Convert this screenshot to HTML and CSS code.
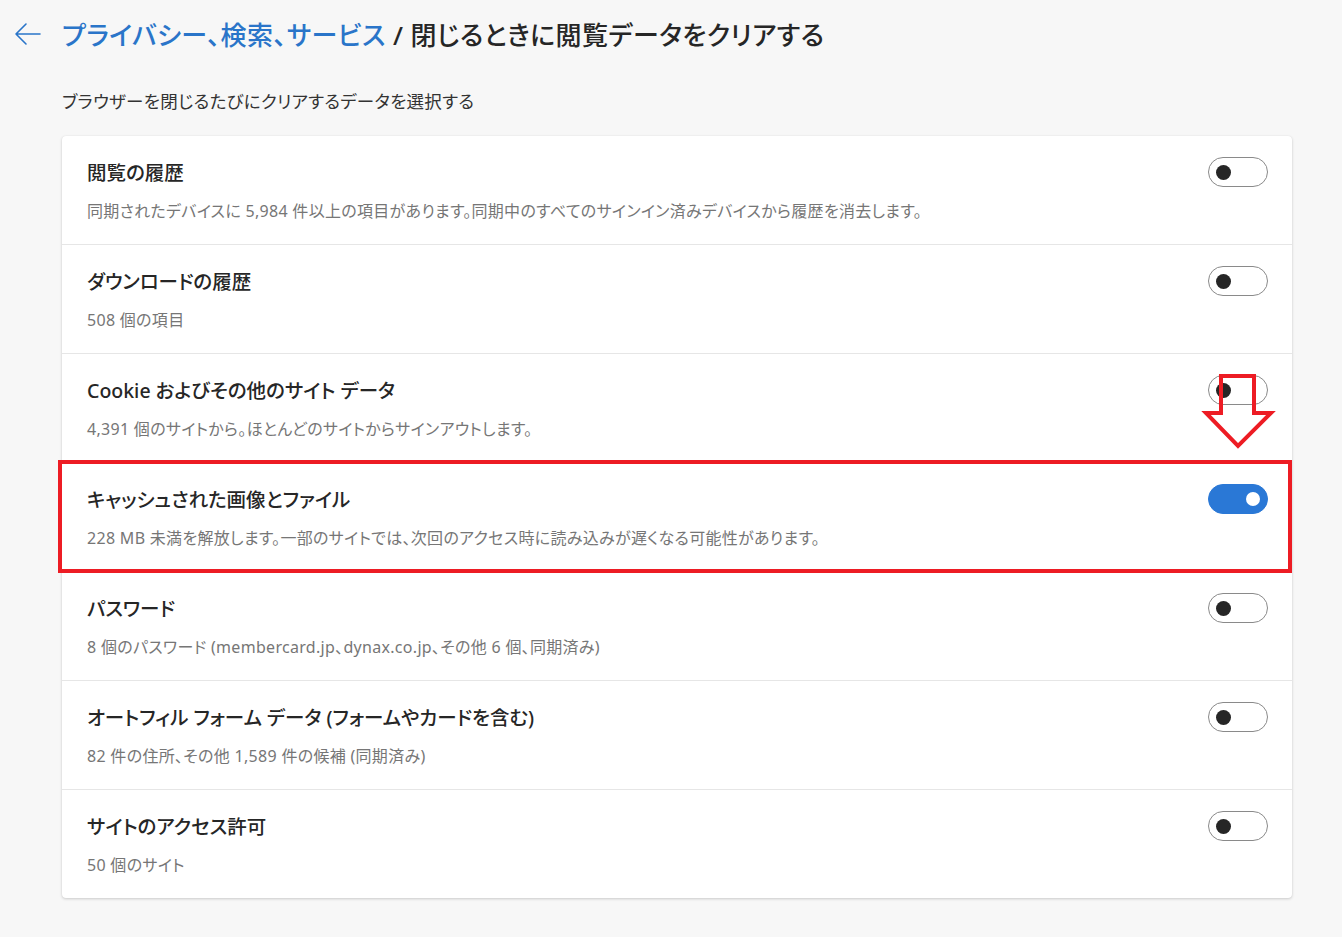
FILE: index.html
```html
<!DOCTYPE html>
<html lang="ja">
<head>
<meta charset="utf-8">
<link rel="stylesheet" href="styles.css">
</head>
<body>
<header class="header">
  <button class="back" aria-label="戻る">
    <svg width="28" height="24" viewBox="0 0 28 24"><path d="M2 12 H26 M12 2 L2 12 L12 22" fill="none" stroke="#2a75c9" stroke-width="1.6" stroke-linecap="round" stroke-linejoin="round"/></svg>
  </button>
  <h1 class="title"><span class="crumb">プライバシー、検索、サービス</span><span class="sep"> / </span>閉じるときに閲覧データをクリアする</h1>
</header>
<p class="lead">ブラウザーを閉じるたびにクリアするデータを選択する</p>
<div class="card-wrap">
  <div class="card">
    <div class="row">
      <div class="text"><div class="rtitle">閲覧の履歴</div><div class="rsub">同期されたデバイスに 5,984 件以上の項目があります。同期中のすべてのサインイン済みデバイスから履歴を消去します。</div></div>
      <span class="toggle"></span>
    </div>
    <div class="row">
      <div class="text"><div class="rtitle">ダウンロードの履歴</div><div class="rsub">508 個の項目</div></div>
      <span class="toggle"></span>
    </div>
    <div class="row">
      <div class="text"><div class="rtitle">Cookie およびその他のサイト データ</div><div class="rsub">4,391 個のサイトから。ほとんどのサイトからサインアウトします。</div></div>
      <span class="toggle"></span>
    </div>
    <div class="row">
      <div class="text"><div class="rtitle">キャッシュされた画像とファイル</div><div class="rsub">228 MB 未満を解放します。一部のサイトでは、次回のアクセス時に読み込みが遅くなる可能性があります。</div></div>
      <span class="toggle on"></span>
    </div>
    <div class="row">
      <div class="text"><div class="rtitle">パスワード</div><div class="rsub">8 個のパスワード (membercard.jp、dynax.co.jp、その他 6 個、同期済み)</div></div>
      <span class="toggle"></span>
    </div>
    <div class="row">
      <div class="text"><div class="rtitle">オートフィル フォーム データ (フォームやカードを含む)</div><div class="rsub">82 件の住所、その他 1,589 件の候補 (同期済み)</div></div>
      <span class="toggle"></span>
    </div>
    <div class="row">
      <div class="text"><div class="rtitle">サイトのアクセス許可</div><div class="rsub">50 個のサイト</div></div>
      <span class="toggle"></span>
    </div>
  </div>
  <div class="highlight"></div>
  <svg class="arrow" width="80" height="85" viewBox="0 0 80 85">
    <polygon points="21,6 54,6 54,43 71,43 38,76 6,43 21,43" fill="none" stroke="#ed1c24" stroke-width="4" stroke-linejoin="miter"/>
  </svg>
</div>
</body>
</html>
```
FILE: styles.css
```css
html, body {
  margin: 0;
  padding: 0;
  background: #f7f7f7;
}
body {
  font-family: "Noto Sans", "Noto Sans CJK JP", sans-serif;
  color: #262626;
  font-feature-settings: "palt";
}
.header {
  display: flex;
  align-items: center;
  height: 68px;
  padding-left: 14px;
}
.back {
  border: none;
  background: none;
  padding: 0;
  margin: 0 20px 0 0;
  width: 28px;
  height: 24px;
  display: flex;
}
.title {
  margin: 0;
  font-size: 26px;
  font-weight: 500;
  color: #262626;
  letter-spacing: 0.4px;
}
.crumb {
  color: #2a75c9;
}
.sep {
  color: #262626;
}
.lead {
  margin: 18px 0 0 62px;
  font-size: 17.5px;
  letter-spacing: 0.3px;
  line-height: 30px;
  color: #333;
}
.card-wrap {
  position: relative;
  margin: 20px 50px 40px 62px;
  width: 1230px;
}
.card {
  background: #fff;
  border-radius: 4px;
  box-shadow: 0 1px 3px rgba(0,0,0,0.18), 0 0 1px rgba(0,0,0,0.08);
}
.row {
  display: flex;
  justify-content: space-between;
  align-items: flex-start;
  height: 108px;
  padding: 0 24px 0 25px;
  border-top: 1px solid #e6e6e6;
}
.row:first-child {
  border-top: none;
}
.text {
  padding-top: 23px;
}
.rtitle {
  font-size: 19.5px;
  font-weight: 500;
  line-height: 28px;
  color: #262626;
}
.rsub {
  margin-top: 12px;
  font-size: 16px;
  letter-spacing: 0.3px;
  line-height: 24px;
  color: #767676;
}
.toggle {
  position: relative;
  margin-top: 21px;
  width: 60px;
  height: 30px;
  box-sizing: border-box;
  border: 1px solid #8a8a8a;
  border-radius: 15px;
  flex-shrink: 0;
}
.toggle::after {
  content: "";
  position: absolute;
  left: 7px;
  top: 6.5px;
  width: 15px;
  height: 15px;
  border-radius: 50%;
  background: #262626;
}
.toggle.on {
  background: #2a78d6;
  border-color: #2a78d6;
}
.toggle.on::after {
  left: auto;
  right: 7px;
  width: 14px;
  height: 14px;
  top: 7px;
  background: #fff;
}
.highlight {
  position: absolute;
  left: -4px;
  top: 324px;
  width: 1234px;
  height: 113px;
  box-sizing: border-box;
  border: 4px solid #ed1c24;
  pointer-events: none;
}
.arrow {
  position: absolute;
  left: 1138px;
  top: 234px;
}
```
